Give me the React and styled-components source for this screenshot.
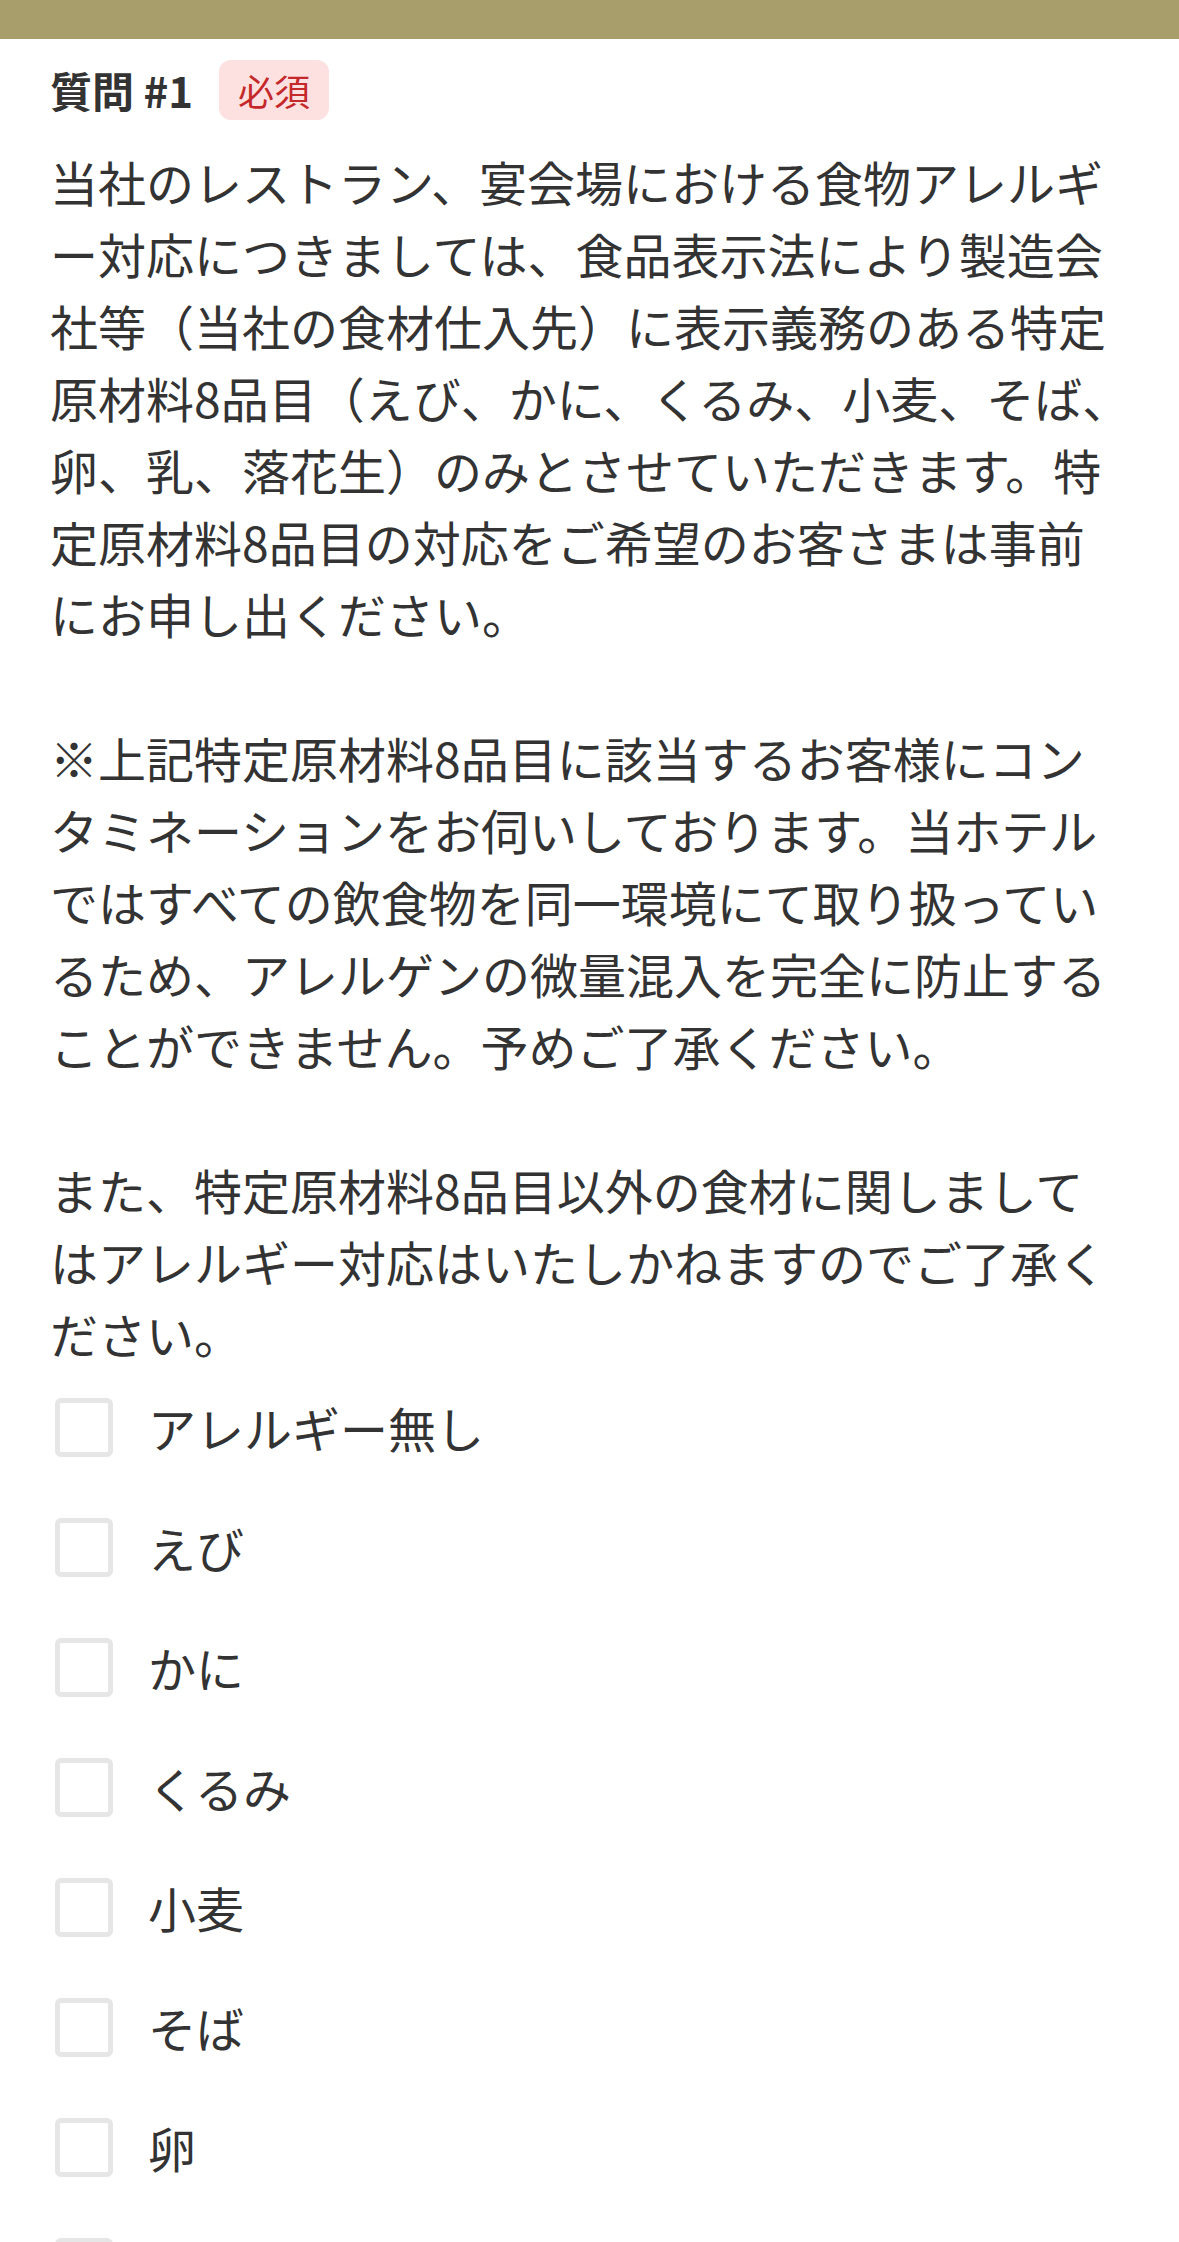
import React from "react";
import styled, { createGlobalStyle } from "styled-components";

const Global = createGlobalStyle`
  html, body {
    margin: 0;
    padding: 0;
    background: #ffffff;
  }
  body {
    font-family: "Noto Sans CJK JP", "Noto Sans", sans-serif;
    color: #333333;
  }
`;

const TopBar = styled.div`
  height: 39px;
  background: #a79e6b;
`;

const Content = styled.main`
  padding: 21px 50px 0 50px;
`;

const Header = styled.div`
  display: flex;
  align-items: center;
  gap: 26px;
  height: 60px;
  margin-bottom: 25px;
`;

const Title = styled.h2`
  margin: 0;
  font-size: 42px;
  font-weight: 700;
  line-height: 60px;
  color: #333333;
`;

const Badge = styled.span`
  display: inline-flex;
  align-items: center;
  height: 60px;
  padding: 0 19px;
  border-radius: 12px;
  background: #fde1e1;
  color: #c4282a;
  font-size: 36px;
  line-height: 1;
`;

const Description = styled.p`
  margin: 0;
  font-size: 48px;
  line-height: 72px;
  white-space: pre;
  color: #333333;
`;

const OptionList = styled.ul`
  list-style: none;
  margin: -2px 0 0 0;
  padding: 0;
`;

const Option = styled.li`
  display: flex;
  align-items: center;
  height: 120px;
`;

const Box = styled.span`
  box-sizing: border-box;
  flex: none;
  width: 58px;
  height: 59px;
  margin-left: 5px;
  margin-right: 35px;
  border: 5px solid #e6e6e6;
  border-radius: 6px;
  background: #ffffff;
`;

const OptionLabel = styled.span`
  font-size: 48px;
  line-height: 72px;
  color: #333333;
`;

const text = [
  "当社のレストラン、宴会場における食物アレルギ",
  "ー対応につきましては、食品表示法により製造会",
  "社等（当社の食材仕入先）に表示義務のある特定",
  "原材料8品目（えび、かに、くるみ、小麦、そば、",
  "卵、乳、落花生）のみとさせていただきます。特",
  "定原材料8品目の対応をご希望のお客さまは事前",
  "にお申し出ください。",
  "",
  "※上記特定原材料8品目に該当するお客様にコン",
  "タミネーションをお伺いしております。当ホテル",
  "ではすべての飲食物を同一環境にて取り扱ってい",
  "るため、アレルゲンの微量混入を完全に防止する",
  "ことができません。予めご了承ください。",
  "",
  "また、特定原材料8品目以外の食材に関しまして",
  "はアレルギー対応はいたしかねますのでご了承く",
  "ださい。",
].join("\n");

const options = [
  "アレルギー無し",
  "えび",
  "かに",
  "くるみ",
  "小麦",
  "そば",
  "卵",
  "乳",
  "落花生",
];

export default function App() {
  return (
    <>
      <Global />
      <TopBar />
      <Content>
        <Header>
          <Title>質問 #1</Title>
          <Badge>必須</Badge>
        </Header>
        <Description>{text}</Description>
        <OptionList>
          {options.map((o) => (
            <Option key={o}>
              <Box />
              <OptionLabel>{o}</OptionLabel>
            </Option>
          ))}
        </OptionList>
      </Content>
    </>
  );
}
